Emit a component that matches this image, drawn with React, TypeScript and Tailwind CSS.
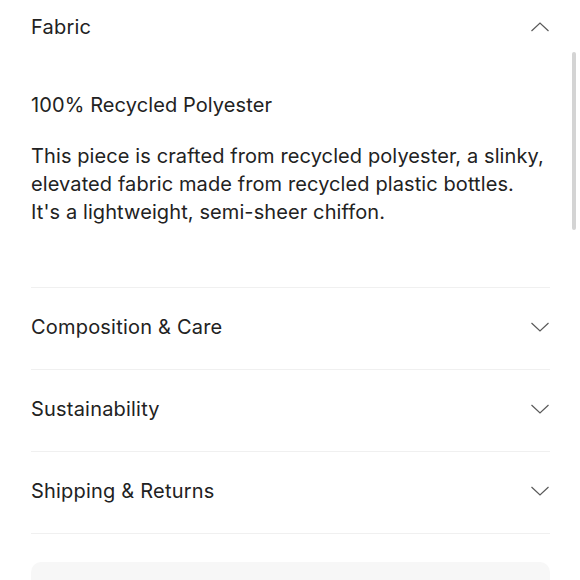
import { useState } from 'react';

const sections = [
  { title: 'Fabric' },
  { title: 'Composition & Care' },
  { title: 'Sustainability' },
  { title: 'Shipping & Returns' },
];

function Chevron({ up }: { up?: boolean }) {
  return (
    <svg width="20" height="12" viewBox="0 0 20 12" fill="none" className="shrink-0">
      <path
        d={up ? 'M1.5 10L10 2L18.5 10' : 'M1.5 2L10 10L18.5 2'}
        stroke="#5a5a5a"
        strokeWidth="1.2"
      />
    </svg>
  );
}

export default function App() {
  const [open, setOpen] = useState(0);

  return (
    <div className="relative w-[580px] h-[580px] overflow-hidden bg-white text-[#222] font-['Inter',sans-serif]">
      <div className="px-[31px] pr-[30px]">
        {sections.map((s, i) => (
          <div key={s.title} className={i > 0 ? 'border-t border-[#f0f0f0]' : ''}>
            <button
              onClick={() => setOpen(open === i ? -1 : i)}
              className={`w-full flex items-center justify-between text-left ${i === 0 ? 'h-[54px]' : 'h-[81px] pb-[3px]'}`}
            >
              <span className="text-[20px] tracking-[0.2px]">{s.title}</span>
              <Chevron up={open === i} />
            </button>
            {open === i && i === 0 && (
              <div className="pt-[37px] pb-[61px] text-[20px] tracking-[0.1px]">
                <p className="leading-[28px]">100% Recycled Polyester</p>
                <p className="mt-[23px] leading-[28px]">
                  This piece is crafted from recycled polyester, a slinky,
                  <br />
                  elevated fabric made from recycled plastic bottles.
                  <br />
                  It's a lightweight, semi-sheer chiffon.
                </p>
              </div>
            )}
          </div>
        ))}
        <div className="border-t border-[#f0f0f0]" />
        <div className="mt-[28px] h-[60px] rounded-[10px] bg-[#f7f7f7]" />
      </div>
      <div className="absolute left-[572px] top-[52px] w-[4px] h-[178px] rounded-full bg-[#d4d4d4]" />
    </div>
  );
}
